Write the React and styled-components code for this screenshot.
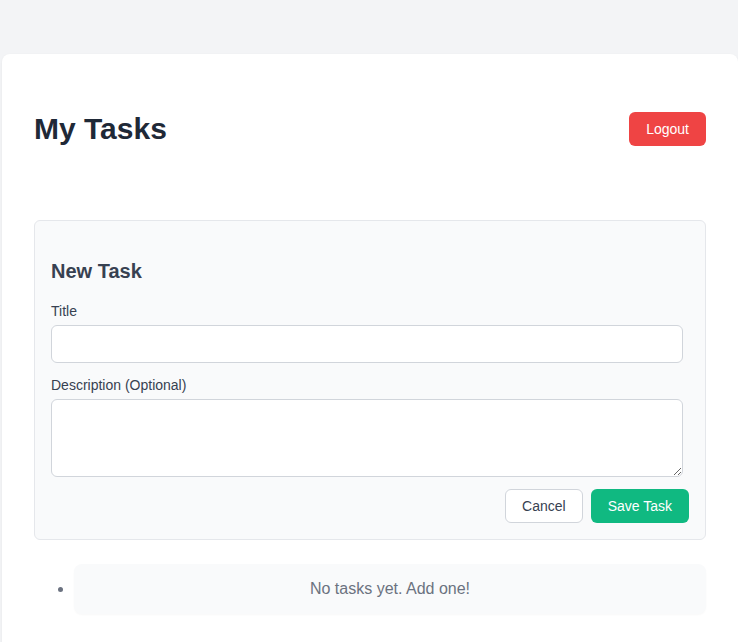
import React, { useState } from "react";
import styled, { createGlobalStyle } from "styled-components";

const Global = createGlobalStyle`
  html, body { margin: 0; padding: 0; background: #f3f4f6; }
  body { font-family: "Liberation Sans", Arial, sans-serif; }
  * { box-sizing: border-box; }
`;

const Page = styled.div`
  padding: 54px 0 0 2px;
  min-height: 642px;
`;

const Card = styled.main`
  background: #ffffff;
  border-radius: 8px;
  padding: 32px;
  min-height: 600px;
  box-shadow: 0 1px 3px rgba(0, 0, 0, 0.06);
`;

const Header = styled.header`
  display: flex;
  align-items: center;
  justify-content: space-between;
  height: 86px;
  margin-bottom: 48px;
`;

const Heading = styled.h1`
  margin: 0;
  font-size: 30px;
  font-weight: 700;
  color: #1f2937;
`;

const Button = styled.button`
  height: 34px;
  padding: 0 16px;
  border-radius: 6px;
  font-family: inherit;
  font-size: 14px;
  cursor: pointer;
  border: 1px solid ${(p) => (p.$variant === "ghost" ? "#d1d5db" : "transparent")};
  background: ${(p) =>
    p.$variant === "danger" ? "#ef4444" : p.$variant === "success" ? "#10b981" : "#ffffff"};
  color: ${(p) => (p.$variant === "ghost" ? "#374151" : "#ffffff")};
`;

const FormBox = styled.form`
  background: #f9fafb;
  border: 1px solid #e5e7eb;
  border-radius: 6px;
  padding: 39px 16px 16px;
`;

const FormTitle = styled.h3`
  margin: 0 0 20px;
  font-size: 20px;
  font-weight: 700;
  color: #374151;
`;

const Field = styled.div`
  margin-bottom: ${(p) => p.$gap}px;
`;

const Label = styled.label`
  display: block;
  font-size: 14px;
  color: #374151;
  margin-bottom: 6px;
`;

const TextInput = styled.input`
  display: block;
  width: calc(100% - 6px);
  height: 38px;
  padding: 8px 12px;
  border: 1px solid #d1d5db;
  border-radius: 6px;
  background: #ffffff;
  font-family: inherit;
  font-size: 14px;
`;

const TextArea = styled.textarea`
  display: block;
  width: calc(100% - 6px);
  height: 78px;
  padding: 8px 12px;
  border: 1px solid #d1d5db;
  border-radius: 6px;
  background: #ffffff;
  font-family: inherit;
  font-size: 14px;
  resize: vertical;
`;

const Actions = styled.div`
  display: flex;
  justify-content: flex-end;
  gap: 8px;
`;

const List = styled.ul`
  margin: 24px 0 0;
  padding-left: 40px;
  color: #6b7280;
`;

const EmptyItem = styled.li`
  background: #f9fafb;
  border-radius: 8px;
  padding: 16px;
  text-align: center;
  font-size: 16px;
  color: #6b7280;
  box-shadow: 0 1px 2px rgba(0, 0, 0, 0.03);
`;

export default function App() {
  const [title, setTitle] = useState("");
  const [desc, setDesc] = useState("");
  return (
    <>
      <Global />
      <Page>
        <Card>
          <Header>
            <Heading>My Tasks</Heading>
            <Button $variant="danger" type="button">Logout</Button>
          </Header>
          <FormBox onSubmit={(e) => e.preventDefault()}>
            <FormTitle>New Task</FormTitle>
            <Field $gap={14}>
              <Label htmlFor="title">Title</Label>
              <TextInput id="title" value={title} onChange={(e) => setTitle(e.target.value)} />
            </Field>
            <Field $gap={12}>
              <Label htmlFor="desc">Description (Optional)</Label>
              <TextArea id="desc" value={desc} onChange={(e) => setDesc(e.target.value)} />
            </Field>
            <Actions>
              <Button $variant="ghost" type="button">Cancel</Button>
              <Button $variant="success" type="submit">Save Task</Button>
            </Actions>
          </FormBox>
          <List>
            <EmptyItem>No tasks yet. Add one!</EmptyItem>
          </List>
        </Card>
      </Page>
    </>
  );
}
